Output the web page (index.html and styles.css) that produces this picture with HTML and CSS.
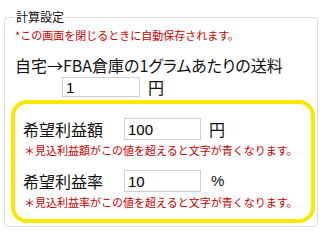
FILE: index.html
```html
<!DOCTYPE html>
<html lang="ja">
<head>
<meta charset="utf-8">
<link rel="stylesheet" href="styles.css">
</head>
<body>
<fieldset class="panel">
  <legend class="panel-title">計算設定</legend>
  <p class="note note-top">*この画面を閉じるときに自動保存されます。</p>
  <p class="label-line">自宅→FBA倉庫の1グラムあたりの送料</p>
  <div class="ship-row">
    <input class="field field-ship" type="text" value="1">
    <span class="unit">円</span>
  </div>
  <div class="target-box">
    <div class="row">
      <span class="row-label">希望利益額</span>
      <input class="field" type="text" value="100">
      <span class="unit">円</span>
    </div>
    <p class="note note-in">＊見込利益額がこの値を超えると文字が青くなります。</p>
    <div class="row row-second">
      <span class="row-label">希望利益率</span>
      <input class="field" type="text" value="10">
      <span class="unit unit-pct">%</span>
    </div>
    <p class="note note-in">＊見込利益率がこの値を超えると文字が青くなります。</p>
  </div>
</fieldset>
</body>
</html>
```

FILE: styles.css
```css
html, body {
  margin: 0;
  padding: 0;
  background: #ffffff;
}

body {
  font-family: "Noto Sans CJK JP", "Noto Sans", sans-serif;
  color: #111;
  font-feature-settings: "palt";
}

.panel {
  margin: 10px 0 0 4px;
  width: 314px;
  box-sizing: border-box;
  border: 1px solid #dcdcdc;
  border-radius: 4px;
  padding: 0 2px 3px 6px;
}

.panel-title {
  margin-left: 3px;
  padding: 0 2px;
  font-size: 12px;
  line-height: 14px;
}

.note {
  margin: 0;
  color: #c80000;
  font-size: 11px;
  line-height: 18px;
  white-space: nowrap;
  font-feature-settings: normal;
}

.note-top {
  margin-top: 2px;
  padding-left: 4px;
}

.label-line {
  margin: 11px 0 0 4px;
  font-size: 16px;
  line-height: 20px;
  white-space: nowrap;
}

.ship-row {
  display: flex;
  align-items: center;
  margin: 2px 0 0 51px;
  height: 20px;
}

.field {
  box-sizing: border-box;
  width: 77px;
  height: 22px;
  margin: 0;
  padding: 0 3px;
  border: 1px solid #cfcfcf;
  font-family: "Liberation Sans", sans-serif;
  font-size: 15px;
  color: #000;
  background: #fff;
  outline: none;
}

.field-ship {
  width: 78px;
  height: 20px;
}

.unit {
  margin-left: 8px;
  font-size: 16px;
  line-height: 20px;
}

.unit-pct {
  margin-left: 10px;
  font-family: "Liberation Sans", sans-serif;
  font-size: 15px;
}

.target-box {
  margin-top: 3px;
  margin-left: 0;
  border: 4px solid #fbe800;
  border-radius: 16px;
  padding: 14px 0 8px 8px;
}

.row {
  display: flex;
  align-items: center;
  height: 22px;
}

.row-second {
  margin-top: 11px;
}

.row-label {
  width: 101px;
  font-size: 16px;
  line-height: 22px;
}

.note-in {
  margin-top: 1px;
  padding-left: 1px;
}
```
